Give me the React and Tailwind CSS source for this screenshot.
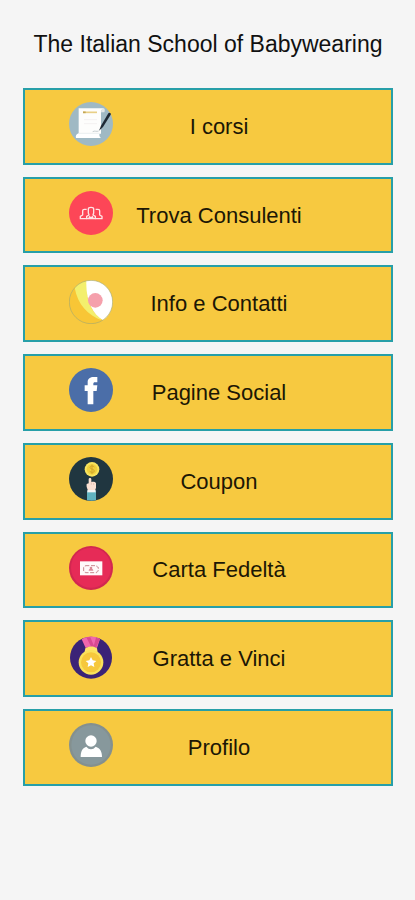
function IconFrame({ children }) {
  return (
    <svg
      viewBox="27 20 132 132"
      aria-hidden="true"
      className="col-start-1 row-start-1 mb-1 ml-11 size-11 self-center justify-self-start"
    >
      {children}
    </svg>
  );
}

function CoursesIcon() {
  return (
    <IconFrame>
      <circle cx="93" cy="86" r="66" fill="#9fb9c4" />
      <path d="M56 39h76c-7 2-9 7-9 14v62H56z" fill="#fdfdfc" />
      <path d="M123 53c0-9 3-14 9-14 3 3 3 8 1 12h-10z" fill="#e3e8e8" />
      <path d="M48 128c-2-6 1-12 8-14h63c-2 5-1 11 4 14z" fill="#fff" />
      <path d="M57 114h61" stroke="#e6ebed" strokeWidth="2" />
      <path d="M69 51h42" stroke="#e8cf86" strokeWidth="5" />
      <path d="M69 51h8" stroke="#c3a553" strokeWidth="5" />
      <path d="M72 73h39M72 85h39" stroke="#f4f1f1" strokeWidth="3" />
      <path d="M98 109c7-4 11 1 18-2" fill="none" stroke="#a9b5b9" strokeWidth="2" />
      <path d="M117 106l6-15 22-37c3-4 9-1 7 4l-23 37z" fill="#1e2a35" />
    </IconFrame>
  );
}

function ConsultantsIcon() {
  return (
    <IconFrame>
      <circle cx="93" cy="86" r="66" fill="#fd4657" />
      <g fill="none" stroke="#ffe3e4" strokeWidth="4" strokeLinejoin="round">
        <path d="M80 103H61v-7l7-4V79c0-3 2-4 5-4h7" />
        <path d="M106 103h20v-7l-7-4V79c0-3-2-4-5-4h-7" />
        <path d="M80 103v-7l7-4-2-6V74c0-4 3-5 8-5s8 1 8 5v12l-2 6 7 4v7z" />
      </g>
      <path d="M88 94l5 4 5-4 3 7H85z" fill="#ffe3e4" />
    </IconFrame>
  );
}

function InfoIcon() {
  return (
    <IconFrame>
      <circle cx="93" cy="86" r="65" fill="#f8c636" />
      <path d="M44 43C54 31 68 23 82 22v44c4 32 17 51 44 75-42-15-73-47-82-98z" fill="#f3ef6d" />
      <path d="M79 22c42-9 79 23 79 64 0 24-12 43-29 55-31-20-52-56-50-119z" fill="#fff" />
      <circle cx="106" cy="81" r="22" fill="#f5a0ac" />
      <circle cx="93" cy="86" r="65" fill="none" stroke="#a9ab6c" strokeWidth="2" />
    </IconFrame>
  );
}

function SocialIcon() {
  return (
    <IconFrame>
      <circle cx="93" cy="86" r="66" fill="#4b6ea8" />
      <path
        d="M83 129V89H74V72h9V62c0-10 8-15 18-15h11v16h-7c-4 0-5 2-5 5v4h12l-2 17h-10v40z"
        fill="#fff"
      />
    </IconFrame>
  );
}

function CouponIcon() {
  return (
    <IconFrame>
      <circle cx="93" cy="86" r="66" fill="#203640" />
      <path d="M81 123h27v27c-9 2-18 2-27 0z" fill="#60b2c0" />
      <path d="M82 118h25v8H82z" fill="#f5f5f5" />
      <path d="M84 119c-4-6-5-11-4-18l6-2V87c0-5 8-5 8 0v8c5-1 12-1 14 4v14l-3 6z" fill="#fae0d2" />
      <path d="M94 96v7M101 98v6" stroke="#dcb7a8" strokeWidth="2" />
      <circle cx="96" cy="57" r="22" fill="#f8e45e" />
      <circle cx="96" cy="57" r="16" fill="#f0d03c" />
      <path
        d="M103 50c-3-4-13-4-13 1 0 7 13 4 13 11 0 6-10 5-14 1M96 43v28"
        fill="none"
        stroke="#d3a62c"
        strokeWidth="3"
      />
    </IconFrame>
  );
}

function LoyaltyIcon() {
  return (
    <IconFrame>
      <circle cx="93" cy="86" r="66" fill="#d22750" />
      <circle cx="93" cy="85" r="60" fill="#e62b57" />
      <path d="M60 66h67v42H60z" fill="#fffafa" />
      <path
        d="M76 79h34c0 3 2 5 5 5v11c-3 0-5 2-5 5H76c0-3-2-5-5-5V84c3 0 5-2 5-5z"
        fill="none"
        stroke="#c9868e"
        strokeWidth="3"
        strokeDasharray="12 5"
      />
      <path d="M86 94c0-5 3-6 7-6s7 1 7 6z" fill="#db8b97" />
      <circle cx="93" cy="86" r="4" fill="#db8b97" />
    </IconFrame>
  );
}

function MedalIcon() {
  return (
    <IconFrame>
      <circle cx="93" cy="88" r="63" fill="#3b2377" />
      <path d="M65 33c16-11 38-11 55-1l-9 27c-11-5-24-5-34 0z" fill="#f067ae" />
      <path d="M79 27h12l12 28-9 2zM120 32l-11 25h-9l8-29z" fill="#d94992" />
      <path d="M76 60c11-7 25-7 35 0l3 19H72z" fill="#ffe36b" />
      <circle cx="93" cy="102" r="37" fill="#fae25b" />
      <circle cx="93" cy="102" r="30" fill="#f6c83c" />
      <path d="M93 86l5 10 11 2-8 7 2 11-10-5-10 5 2-11-8-7 11-2z" fill="#fff" />
    </IconFrame>
  );
}

function ProfileIcon() {
  return (
    <IconFrame>
      <circle cx="93" cy="86" r="66" fill="#84908f" />
      <circle cx="93" cy="86" r="59" fill="#87989c" />
      <circle cx="93" cy="74" r="17" fill="#fff" />
      <path d="M62 122c0-16 4-26 17-31 8 10 20 10 28 0 14 5 19 15 19 31z" fill="#fff" />
    </IconFrame>
  );
}

const entries = [
  { label: "I corsi", Icon: CoursesIcon },
  { label: "Trova Consulenti", Icon: ConsultantsIcon },
  { label: "Info e Contatti", Icon: InfoIcon },
  { label: "Pagine Social", Icon: SocialIcon },
  { label: "Coupon", Icon: CouponIcon },
  { label: "Carta Fedeltà", Icon: LoyaltyIcon },
  { label: "Gratta e Vinci", Icon: MedalIcon },
  { label: "Profilo", Icon: ProfileIcon },
];

export default function App() {
  return (
    <main className="min-h-screen bg-[#f5f5f5] pr-[22px] pb-6 pl-[23px] font-['Liberation_Sans',Arial,sans-serif] text-[#111]">
      <h1 className="pt-7 text-center text-[23px] leading-8 whitespace-nowrap">
        The Italian School of Babywearing
      </h1>
      <nav className="flex flex-col gap-3 pt-7">
        {entries.map(({ label, Icon }) => (
          <button
            key={label}
            type="button"
            className="grid aspect-[82/17] w-full grid-cols-1 items-center border-2 border-[#279fa8] bg-[#f7c940] text-[22px] leading-8 text-[#1c1705]"
          >
            <Icon />
            <span className="col-start-1 row-start-1 pt-px pl-[22px]">{label}</span>
          </button>
        ))}
      </nav>
    </main>
  );
}
